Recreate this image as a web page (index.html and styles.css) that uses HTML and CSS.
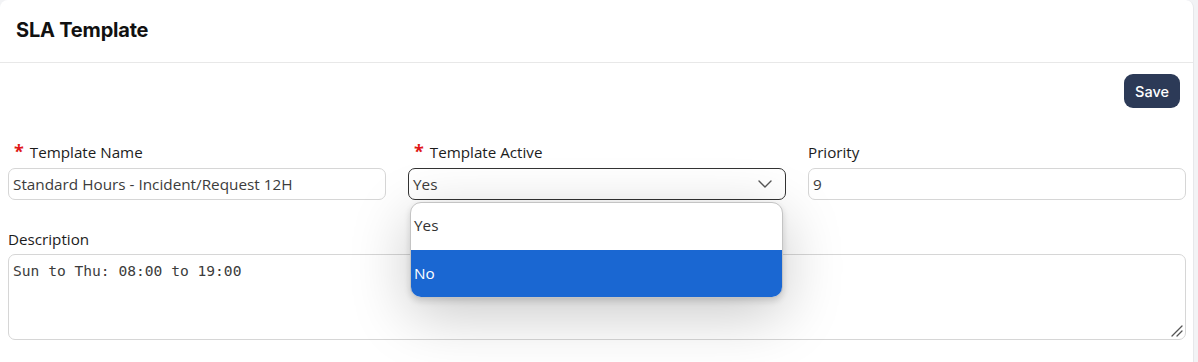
FILE: index.html
```html
<!DOCTYPE html>
<html>
<head>
<meta charset="utf-8">
<link rel="stylesheet" href="styles.css">
</head>
<body>
<div class="page">
  <div class="card">
    <div class="card-header">
      <h1 class="title">SLA Template</h1>
    </div>
    <div class="card-body">
      <div class="actions">
        <button class="btn-save">Save</button>
      </div>
      <div class="row">
        <div class="field">
          <label class="label"><span class="req">*</span>Template Name</label>
          <div class="input">Standard Hours - Incident/Request 12H</div>
        </div>
        <div class="field">
          <label class="label"><span class="req">*</span>Template Active</label>
          <div class="select-wrap">
            <div class="input select">
              <span>Yes</span>
              <svg class="chev" width="14" height="8" viewBox="0 0 14 8"><path d="M1 1l6 6 6-6" fill="none" stroke="#555" stroke-width="1.4" stroke-linecap="round" stroke-linejoin="round"/></svg>
            </div>
            <div class="dropdown">
              <div class="option">Yes</div>
              <div class="option selected">No</div>
            </div>
          </div>
        </div>
        <div class="field">
          <label class="label">Priority</label>
          <div class="input">9</div>
        </div>
      </div>
      <div class="field full">
        <label class="label">Description</label>
        <div class="textarea">Sun to Thu: 08:00 to 19:00
          <svg class="grip" width="12" height="12" viewBox="0 0 12 12"><path d="M11 1L1 11M11 6L6 11" stroke="#555" stroke-width="1.3" stroke-linecap="round"/></svg>
        </div>
      </div>
    </div>
  </div>
</div>
</body>
</html>
```

FILE: styles.css
```css
* { box-sizing: border-box; }
html, body { margin: 0; padding: 0; }
body {
  background: #f2f3f5;
  font-family: "Open Sans", "Lato", sans-serif;
  color: #222;
  width: 1198px;
  height: 362px;
  overflow: hidden;
}
.page { padding-right: 4px; }
.card {
  background: #fff;
  border-radius: 8px 8px 0 0;
  border-right: 1px solid #e6e7ea;
  height: 380px;
}
.card-header {
  height: 63px;
  border-bottom: 1px solid #e8e8e8;
  display: flex;
  align-items: center;
  padding-left: 16px;
}
.title {
  margin: 0;
  font-family: "Inter", sans-serif;
  font-size: 20px;
  font-weight: 700;
  color: #111;
  letter-spacing: -0.2px;
  padding-bottom: 2px;
}
.card-body { padding: 10px 8px 0 8px; }
.actions {
  display: flex;
  justify-content: flex-end;
  padding-right: 5px;
}
.btn-save {
  background: #2c3a57;
  color: #fff;
  border: none;
  border-radius: 9px;
  height: 34px;
  width: 56px;
  margin-top: 1px;
  font-family: "Inter", sans-serif;
  font-size: 14.5px;
  font-weight: 500;
}
.row {
  display: grid;
  grid-template-columns: 378px 378px 378px;
  column-gap: 22px;
  margin-top: 34px;
}
.field { display: flex; flex-direction: column; }
.label {
  font-size: 15.2px;
  color: #1c1c1c;
  height: 26px;
  line-height: 20px;
  display: flex;
  align-items: flex-start;
}
.req {
  color: #e01818;
  font-size: 18px;
  font-weight: 700;
  margin: 0 6px 0 6px;
  line-height: 16px;
  padding-top: 1px;
}
.input {
  height: 32px;
  border: 1px solid #d6d6d6;
  border-radius: 7px;
  padding: 0 4px;
  display: flex;
  align-items: center;
  font-size: 15.3px;
  color: #3c3c3c;
}
.select-wrap { position: relative; }
.select {
  border-color: #333;
  justify-content: space-between;
  padding-right: 13px;
}
.chev { display: block; }
.dropdown {
  position: absolute;
  top: 34px;
  left: 2px;
  width: 373px;
  background: #fff;
  border-radius: 11px;
  overflow: hidden;
  border: 1px solid #c4c4c4;
  box-shadow: 0 16px 60px rgba(0,0,0,0.22), 0 3px 6px rgba(0,0,0,0.14);
  z-index: 5;
}
.option {
  height: 47px;
  display: flex;
  align-items: center;
  padding-left: 3px;
  padding-bottom: 4px;
  font-size: 15.3px;
  color: #333;
}
.option.selected { background: #1a67d2; color: #fff; padding-bottom: 1px; }
.full { margin-top: 29px; }
.full .label { height: 25px; line-height: 20px; }
.textarea {
  position: relative;
  height: 86px;
  border: 1px solid #d6d6d6;
  border-radius: 7px;
  padding: 7px 4px;
  font-family: "DejaVu Sans Mono", monospace;
  font-size: 14.6px;
  color: #3c3c3c;
  width: 1178px;
}
.grip { position: absolute; right: 2px; bottom: 2px; }
```
